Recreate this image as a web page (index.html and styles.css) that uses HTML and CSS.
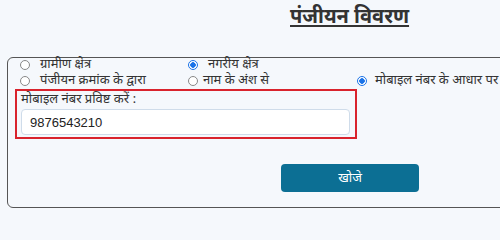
FILE: index.html
```html
<!DOCTYPE html>
<html lang="hi">
<head>
<meta charset="utf-8">
<title>पंजीयन विवरण</title>
<link rel="stylesheet" href="styles.css">
</head>
<body>
<h1 class="title">पंजीयन विवरण</h1>
<div class="panel">
  <div class="options">
    <label class="opt"><input type="radio" name="area"><span class="gap-10">ग्रामीण क्षेत्र</span></label>
    <label class="opt"><input type="radio" name="area" checked><span class="gap-10">नगरीय क्षेत्र</span></label>
    <span></span>
    <label class="opt"><input type="radio" name="mode"><span class="gap-10">पंजीयन क्रमांक के द्वारा</span></label>
    <label class="opt"><input type="radio" name="mode"><span class="gap-5">नाम के अंश से</span></label>
    <label class="opt"><input type="radio" name="mode" checked><span class="gap-8">मोबाइल नंबर के आधार पर</span></label>
  </div>
  <div class="mobile-box">
    <label class="field-label" for="mobile">मोबाइल नंबर प्रविष्ट करें :</label>
    <input class="field-input" id="mobile" type="text" value="9876543210">
  </div>
  <div class="actions">
    <button class="btn-search" type="button">खोजे</button>
  </div>
</div>
</body>
</html>
```
FILE: styles.css
```css
html, body {
  margin: 0;
  padding: 0;
  overflow: hidden;
}
body {
  width: 500px;
  height: 208px;
  background: #f5f8fc;
  font-family: "Noto Sans Devanagari", "Noto Sans", "Liberation Sans", sans-serif;
  color: #333;
}
.title {
  margin: 0;
  padding: 5px 0 0 290px;
  height: 57px;
  box-sizing: border-box;
  font-size: 20px;
  line-height: 26px;
  font-weight: bold;
  color: #333;
  text-decoration: underline;
  text-decoration-thickness: 2px;
  text-underline-offset: 2px;
}
.panel {
  margin-left: 7px;
  width: 540px;
  height: 151px;
  box-sizing: border-box;
  border: 1px solid #555;
  border-radius: 6px;
  padding-bottom: 15px;
}
.options {
  display: grid;
  grid-template-columns: 168px 169px auto;
  padding-left: 12px;
  margin-top: -1px;
}
.opt {
  display: flex;
  align-items: center;
  height: 16px;
  line-height: 16px;
  font-size: 13px;
  color: #333;
}
.opt input {
  appearance: none;
  -webkit-appearance: none;
  width: 10px;
  height: 10px;
  margin: 0;
  border: 1px solid #888;
  border-radius: 50%;
  background: #fff;
  box-sizing: border-box;
  flex: none;
}
.opt input:checked {
  border-color: #1a73e8;
  background: radial-gradient(circle, #1a73e8 0 2.5px, #fff 3px);
}
.gap-10 { margin-left: 10px; }
.gap-8 { margin-left: 8px; }
.gap-5 { margin-left: 5px; }
.mobile-box {
  margin-left: 7px;
  width: 342px;
  box-sizing: border-box;
  border: 2px solid #d9232d;
  padding: 0 6px 2px 4px;
}
.field-label {
  display: block;
  font-size: 13px;
  line-height: 17px;
  color: #333;
}
.field-input {
  display: block;
  width: 329px;
  height: 26px;
  box-sizing: border-box;
  margin-top: 1px;
  border: 1px solid #cfdcea;
  border-radius: 4px;
  background: #fff;
  padding: 0 8px;
  font-family: "Liberation Sans", sans-serif;
  font-size: 13px;
  color: #222;
  outline: none;
}
.actions {
  padding-left: 273px;
  margin-top: 25px;
}
.btn-search {
  display: block;
  width: 138px;
  height: 28px;
  border: none;
  border-radius: 4px;
  background: #0c6f94;
  color: #fff;
  font-family: "Noto Sans Devanagari", "Noto Sans", "Liberation Sans", sans-serif;
  font-size: 13px;
  cursor: pointer;
}
```
